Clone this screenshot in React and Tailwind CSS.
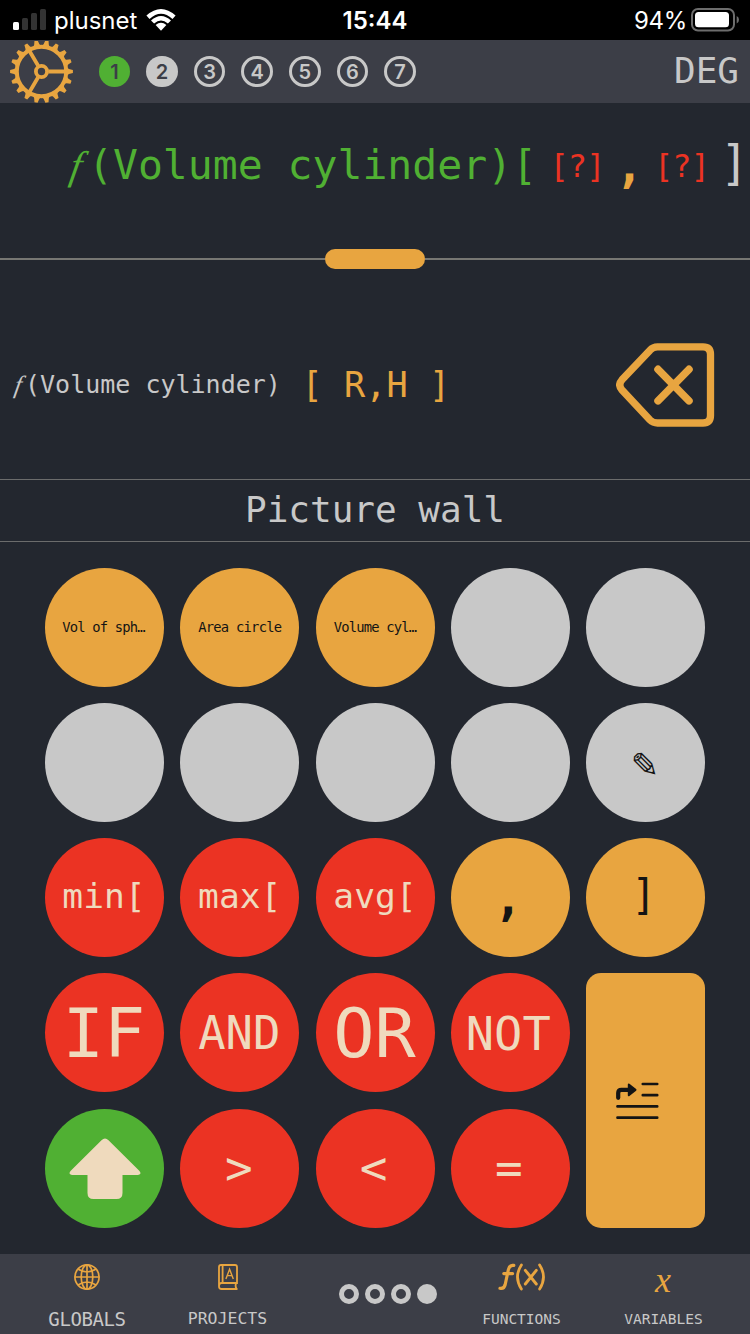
import React from "react";

const MONO = "font-['DejaVu_Sans_Mono',monospace]";

function Signal() {
  return (
    <svg width="34" height="22" viewBox="0 0 34 22" className="block">
      <rect x="0" y="13" width="6" height="8" rx="1.5" fill="#fff" />
      <rect x="9" y="9" width="6" height="12" rx="1.5" fill="#333" />
      <rect x="18" y="4" width="6" height="17" rx="1.5" fill="#333" />
      <rect x="27" y="0" width="6" height="21" rx="1.5" fill="#333" />
    </svg>
  );
}

function Wifi() {
  return (
    <svg width="30" height="22" viewBox="0 0 30 22" className="block">
      <path d="M0.4 6.6 Q15 -6.6 29.6 6.6 L26.5 9.9 Q15 -0.6 3.5 9.9Z" fill="#fff" />
      <path d="M5 11.4 Q15 2.4 25 11.4 L21.9 14.6 Q15 8.2 8.1 14.6Z" fill="#fff" />
      <path d="M9.6 16.1 Q15 11.3 20.4 16.1 L15 21.8Z" fill="#fff" />
    </svg>
  );
}

function Battery() {
  return (
    <svg width="48" height="24" viewBox="0 0 48 24" className="block">
      <rect x="1" y="1" width="42" height="21.5" rx="6" fill="none" stroke="#6d6d6d" strokeWidth="2" />
      <rect x="4" y="4" width="34" height="15.2" rx="3.5" fill="#fff" />
      <path d="M45.7 8 Q48 9 48 11.7 T45.7 15.4Z" fill="#6d6d6d" />
    </svg>
  );
}

function Gear() {
  const teeth = Array.from({ length: 18 }, (_, i) => i * 20);
  return (
    <svg width="64" height="62" viewBox="-31.5 -30.5 64 62" className="block">
      <g fill="#e8a540">
        {teeth.map((a) => (
          <path key={a} d="M25 -4.2 L27.5 -2.6 L31.4 -1.6 V1.6 L27.5 2.6 L25 4.2Z" transform={`rotate(${a})`} />
        ))}
      </g>
      <g fill="none" stroke="#e8a540">
        <circle r="24.7" strokeWidth="4" />
        <circle r="5.6" strokeWidth="3.8" />
        <path d="M7 0 H24 M-3.5 -6 L-12.3 -21 M-3.5 6 L-12.3 21" strokeWidth="3.8" />
      </g>
    </svg>
  );
}

function Step({ n, kind }) {
  const style =
    kind === "green"
      ? "bg-[#50b033] text-[#3c3e47]"
      : kind === "solid"
        ? "bg-[#c8c8c8] text-[#3c3e47]"
        : "border-3 border-[#c8c8c8] text-[#c8c8c8]";
  return (
    <div className={`flex h-[31.5px] w-[31.5px] items-center justify-center rounded-full font-[Inter,sans-serif] text-[20px] font-semibold leading-none ${style}`}>
      {n}
    </div>
  );
}

function Backspace() {
  return (
    <svg width="100" height="86" viewBox="0 0 100 86" className="block" fill="none" stroke="#e8a540">
      <path
        d="M41.5 4.8 H87 Q94.5 4.8 94.5 12.3 V73.5 Q94.5 81 87 81 H41.5 Q37 81 34 78 L6 48 Q1.5 42.9 6 37.8 L34 8.2 Q37 4.8 41.5 4.8Z"
        strokeWidth="7.3"
      />
      <path d="M42 27.3 L73 58.8 M73 27.3 L42 58.8" strokeWidth="7.5" strokeLinecap="round" />
    </svg>
  );
}

function Indent() {
  return (
    <svg width="44" height="38" viewBox="0 0 44 38" className="block" stroke="#141414" fill="none" strokeLinecap="round">
      <path d="M26.8 2 H41.2 M26.8 13.2 H41.2 M1.5 24.4 H41.2 M1.5 35.7 H41.2" strokeWidth="2.7" />
      <path d="M2.2 15.8 V11 Q2.2 7.8 5.4 7.8 H12" strokeWidth="4.2" />
      <path d="M12.8 2.5 L19.5 7.9 L12.8 13.3Z" fill="#141414" strokeWidth="2" strokeLinejoin="round" />
    </svg>
  );
}

function Globe() {
  return (
    <svg width="26" height="26" viewBox="0 0 26 26" className="block" fill="none" stroke="#e8a540" strokeWidth="1.7">
      <circle cx="13" cy="13" r="12.1" />
      <ellipse cx="13" cy="13" rx="5.8" ry="12.1" />
      <path d="M13 1 V25 M1 13 H25 M4 5 Q13 11 22 5 M4 21 Q13 15 22 21" />
    </svg>
  );
}

function Book() {
  return (
    <svg width="20" height="26" viewBox="0 0 20 26" className="block" fill="none" stroke="#e8a540" strokeWidth="1.8">
      <path d="M19.5 25 H3.5 Q1 25 1 22.5 V3 Q1 1 3 1 H17 Q19 1 19 3 V19 H3.6 Q1 19 1 22 M4.6 1 V19 M18.2 19 Q16.8 22 18.6 25" />
      <path d="M7.9 15 L11.6 5.2 L15.3 15 M9.2 11.6 H14" strokeWidth="1.4" />
    </svg>
  );
}

function FunctionIcon() {
  return (
    <svg width="48" height="28" viewBox="0 0 48 28" className="block" fill="none" stroke="#e8a540" strokeLinecap="round">
      <path d="M2 25.3 Q6 26.2 7.2 21.5 L10.4 6.5 Q11.6 1.5 15.8 2.4 M5.8 10.6 H14.6" strokeWidth="3.2" />
      <path d="M23.4 2 Q15.6 14 23.4 26 M41.6 2 Q49.4 14 41.6 26" strokeWidth="2.8" />
      <path d="M27.3 7.3 L38.3 21 M38.3 7.3 L27.3 21" strokeWidth="2.9" />
    </svg>
  );
}

const tones = {
  orange: "bg-[#e8a540] text-[#141414]",
  grey: "bg-[#c8c8c8] text-[#141414]",
  red: "bg-[#eb3323] text-[#efdabd]",
  green: "bg-[#50b033] text-[#efdabd]",
};

const keys = [
  ["orange", "Vol of sph…", "text-[13.8px] tracking-[-0.8px] pr-[2px]"],
  ["orange", "Area circle", "text-[13.8px] tracking-[-0.75px]"],
  ["orange", "Volume cyl…", "text-[13.8px] tracking-[-0.8px]"],
  ["grey", "", ""],
  ["grey", "", ""],
  ["grey", "", ""],
  ["grey", "", ""],
  ["grey", "", ""],
  ["grey", "", ""],
  ["grey", "✎", "text-[34px] font-['DejaVu_Sans',sans-serif] pt-[4px] pr-[1px]"],
  ["red", "min[", "text-[34.6px] pr-[1px] pb-[2px]"],
  ["red", "max[", "text-[34.6px] pb-[2px]"],
  ["red", "avg[", "text-[34.6px] pb-[2px]"],
  ["orange", ",", "text-[48px] font-bold pr-[4px]"],
  ["orange", "]", "text-[42px] pr-[3px] pb-[3px]"],
  ["red", "IF", "text-[68.5px] pr-[1px]"],
  ["red", "AND", "text-[45.5px] pr-[1px] pt-[2px]"],
  ["red", "OR", "text-[68.5px] pr-[1px]"],
  ["red", "NOT", "text-[47px] pr-[4px] pt-[1px]"],
  ["enter"],
  ["shift"],
  ["red", ">", "text-[46px] pr-[2px]"],
  ["red", "<", "text-[46px] pr-[3px]"],
  ["red", "=", "text-[46px] pr-[3px]"],
];

function Key({ tone, label, size }) {
  return (
    <button className={`flex h-[119px] w-[119px] items-center justify-center whitespace-pre rounded-full leading-none ${tones[tone]} ${size}`}>
      {label}
    </button>
  );
}

function Tab({ icon, label, className }) {
  return (
    <div className={`flex h-full flex-col items-center ${className}`}>
      <div className="flex h-[46px] items-center">{icon}</div>
      <div className="flex h-[34px] items-center pt-[5px] leading-none">{label}</div>
    </div>
  );
}

export default function App() {
  return (
    <div className={`flex h-[1334px] w-[750px] flex-col overflow-hidden bg-[#23272f] text-[#c8c8c8] ${MONO}`}>
      <div className="grid h-[40px] grid-cols-3 items-center bg-black font-[Inter,sans-serif] text-[24px] leading-none text-white">
        <div className="flex items-center pl-[13px]">
          <Signal />
          <span className="ml-[7px] pt-[2px]">plusnet</span>
          <span className="ml-[9px]"><Wifi /></span>
        </div>
        <div className="pt-[2px] text-center font-semibold">15:44</div>
        <div className="flex items-center justify-end pr-[11px]">
          <span className="mr-[4px] pt-[2px] tracking-[-0.3px]">94%</span>
          <Battery />
        </div>
      </div>

      <div className="flex h-[63px] items-center bg-[#3c3e47] pl-[9.5px] pr-[11px]">
        <Gear />
        <div className="ml-[25.2px] flex gap-[16.1px]">
          <Step n="1" kind="green" />
          <Step n="2" kind="solid" />
          <Step n="3" />
          <Step n="4" />
          <Step n="5" />
          <Step n="6" />
          <Step n="7" />
        </div>
        <div className="ml-auto pb-[2px] text-[36px] leading-none">DEG</div>
      </div>

      <div className="flex h-[146px] items-start whitespace-pre pl-[71px] pt-[36px] leading-[52px]">
        <span className="w-[17px] origin-left -skew-x-10 pt-px font-['Liberation_Serif',serif] text-[40px] italic text-[#50b033]">f</span>
        <span className="w-[461.5px] text-[41.45px] text-[#50b033]">(Volume cylinder)[</span>
        <span className="w-[65.5px] pt-px text-[32px] tracking-[-0.9px] text-[#eb3323]">[?]</span>
        <span className="w-[39px] text-[48px] font-bold text-[#e8a540]">,</span>
        <span className="w-[66px] pt-px text-[32px] tracking-[-0.9px] text-[#eb3323]">[?]</span>
        <span className="-mt-[2px] text-[48px]">]</span>
      </div>

      <div className="flex h-[20px] items-center">
        <div className="h-[2px] flex-1 bg-[#777773]" />
        <div className="h-[20px] w-[100px] rounded-full bg-[#e8a540]" />
        <div className="h-[2px] flex-1 bg-[#777773]" />
      </div>

      <div className="flex h-[210px] items-center pl-[15px] pr-[34px] pt-[22px]">
        <div className="flex items-center whitespace-pre leading-[40px]">
          <span className="w-[10px] origin-left -skew-x-10 font-['Liberation_Serif',serif] text-[25px] italic">f</span>
          <span className="w-[276.5px] text-[25px]">(Volume cylinder)</span>
          <span className="text-[35.3px] text-[#e8a540]">[ R,H ]</span>
        </div>
        <div className="ml-auto"><Backspace /></div>
      </div>

      <div className="flex h-[63px] items-center justify-center border-y border-[#6b6c6c] pb-[2px] text-[36px] leading-none">
        Picture wall
      </div>

      <div className="grid h-[712px] grid-cols-[repeat(5,119px)] grid-rows-[repeat(5,119px)] content-start justify-center gap-x-[16.25px] gap-y-[16.15px] pt-[26px]">
        {keys.map(([tone, label, size], i) => {
          if (tone === "enter") {
            return (
              <button key={i} className="row-span-2 flex items-center justify-center rounded-[15px] bg-[#e8a540] pr-[15px] pt-[1px]">
                <Indent />
              </button>
            );
          }
          if (tone === "shift") {
            return (
              <button key={i} className="flex h-[119px] w-[119px] items-center justify-center rounded-full bg-[#50b033] pt-[1px]">
                <svg width="74" height="62" viewBox="0 0 74 62" className="block">
                  <path
                    d="M33.5 2.2 Q37 -1 40.5 2.2 L71 32.5 Q74.5 36.5 70 37 H54.5 V55 Q54.5 61 48.5 61 H25.5 Q19.5 61 19.5 55 V37 H4 Q-0.5 36.5 3 32.5Z"
                    fill="#efdabd"
                  />
                </svg>
              </button>
            );
          }
          return <Key key={i} tone={tone} label={label} size={size} />;
        })}
      </div>

      <div className="flex h-[80px] shrink-0 bg-[#3c3e47]">
        <Tab className="ml-[27px] w-[120px] text-[19px] tracking-[-0.4px]" icon={<Globe />} label="GLOBALS" />
        <Tab className="ml-[20.5px] w-[120px] text-[16.5px]" icon={<Book />} label="PROJECTS" />
        <div className="ml-[51px] flex w-[98px] items-center gap-[6px]">
          <div className="h-[20px] w-[20px] rounded-full border-[5px] border-[#c8c8c8]" />
          <div className="h-[20px] w-[20px] rounded-full border-[5px] border-[#c8c8c8]" />
          <div className="h-[20px] w-[20px] rounded-full border-[5px] border-[#c8c8c8]" />
          <div className="h-[20px] w-[20px] rounded-full bg-[#c8c8c8]" />
        </div>
        <Tab className="ml-[25px] w-[120px] text-[14.5px]" icon={<FunctionIcon />} label="FUNCTIONS" />
        <Tab
          className="ml-[22px] w-[120px] text-[14.5px]"
          icon={<span className="pr-[1px] pt-[6px] font-['Liberation_Serif',serif] text-[36px] italic leading-none text-[#e8a540]">x</span>}
          label="VARIABLES"
        />
      </div>
    </div>
  );
}
